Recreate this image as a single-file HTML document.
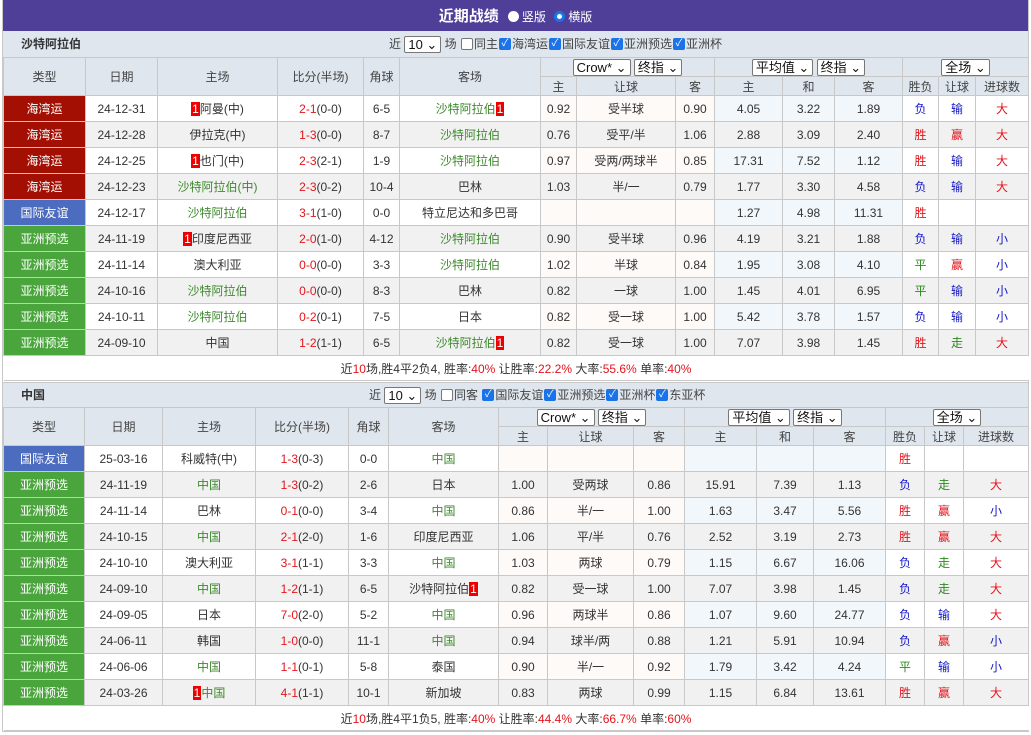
<!DOCTYPE html>
<html><head><meta charset="utf-8"><style>
*{margin:0;padding:0;box-sizing:border-box}
body{width:1031px;height:735px;background:#fff;font-family:"Liberation Sans","Noto Sans CJK SC",sans-serif;font-size:12px;color:#333;overflow:hidden}
.wrap{position:absolute;left:2px;top:0;width:1027px;border:1px solid #c8c8c8;border-top:none}
.title{height:31px;background:#4f3f98;color:#fff;text-align:center;font-size:15px;font-weight:bold;line-height:33px}
.title span{font-size:12px;font-weight:normal}
.rad{display:inline-block;width:11px;height:11px;border-radius:50%;background:#fff;vertical-align:-1px;margin:0 3px 0 5px}
.rad.on{background:#fff;border:3px solid #1a73e8}
.sec{height:26px;background:#dfe6ee;position:relative;line-height:26px}
.sec b{position:absolute;left:18px;font-size:12px;color:#333}
.sec .f{position:absolute;font-size:12px;color:#444}
.sel{display:inline-block;border:1px solid #777;background:#fff;border-radius:2px;height:17px;line-height:15px;padding:0 3px;font-size:13px;color:#111;vertical-align:middle}
.cb{display:inline-block;width:12px;height:12px;border:1px solid #777;border-radius:2px;background:#fff;vertical-align:middle;margin:-2px 1px 0}
.cb.on{background:#1a73e8;border-color:#1a73e8;color:#fff;font-size:10px;line-height:10px;text-align:center;font-style:normal}
table{border-collapse:collapse;table-layout:fixed;width:1025px}
td{border:1px solid #c8c8c8;text-align:center;height:26px;white-space:nowrap;overflow:hidden;font-size:12px}
.h td{background:#dfe6ee;height:19px;color:#444}
.g{color:#3e8a2e}.r{color:#e3141c}.bl{color:#1518c8}.gn{color:#2a8a1a}
.lg{background:#a30f02;color:#fff}.lb{background:#4c6cc0;color:#fff}.lz{background:#4aa53c;color:#fff}
.n{background:#e00;color:#fff;padding:0 1px}
tr.e td{background:#f1f1f1}
td.a{background:#fdfaf8}td.u{background:#f2f7fc}
tr.e td.a,tr.e td.u{background:#f1f1f1}
tr.e td.lg{background:#a30f02}tr.e td.lz{background:#4aa53c}tr.e td.lb{background:#4c6cc0}
.sum td{height:25px;background:#fff;border-left:none;border-right:none}
</style></head><body><div class="wrap">
<div class="title">近期战绩 <span><i class="rad"></i>竖版 <i class="rad on"></i>横版</span></div>
<div class="sec"><b>沙特阿拉伯</b><span class="f" style="left:386px">近 <span class="sel">10 ⌄</span> 场 <i class="cb"></i>同主<i class="cb on">✓</i>海湾运<i class="cb on">✓</i>国际友谊<i class="cb on">✓</i>亚洲预选<i class="cb on">✓</i>亚洲杯</span></div>
<table>
<colgroup><col width="82"><col width="72"><col width="120"><col width="86"><col width="36"><col width="141"><col width="36"><col width="99"><col width="39"><col width="68"><col width="52"><col width="68"><col width="36"><col width="37"><col width="53"></colgroup>
<tr class="h"><td rowspan="2">类型</td><td rowspan="2">日期</td><td rowspan="2">主场</td><td rowspan="2">比分(半场)</td><td rowspan="2">角球</td><td rowspan="2">客场</td><td colspan="3"><span class="sel">Crow* ⌄</span> <span class="sel">终指 ⌄</span></td><td colspan="3"><span class="sel">平均值 ⌄</span> <span class="sel">终指 ⌄</span></td><td colspan="3"><span class="sel">全场 ⌄</span></td></tr>
<tr class="h"><td>主</td><td>让球</td><td>客</td><td>主</td><td>和</td><td>客</td><td>胜负</td><td>让球</td><td>进球数</td></tr>
<tr><td class="lg">海湾运</td><td>24-12-31</td><td><span class="n">1</span>阿曼(中)</td><td><span class="r">2-1</span>(0-0)</td><td>6-5</td><td class="g">沙特阿拉伯<span class="n">1</span></td><td class="a">0.92</td><td class="a">受半球</td><td class="a">0.90</td><td class="u">4.05</td><td class="u">3.22</td><td class="u">1.89</td><td class="bl">负</td><td class="bl">输</td><td class="r">大</td></tr>
<tr class="e"><td class="lg">海湾运</td><td>24-12-28</td><td>伊拉克(中)</td><td><span class="r">1-3</span>(0-0)</td><td>8-7</td><td class="g">沙特阿拉伯</td><td class="a">0.76</td><td class="a">受平/半</td><td class="a">1.06</td><td class="u">2.88</td><td class="u">3.09</td><td class="u">2.40</td><td class="r">胜</td><td class="r">赢</td><td class="r">大</td></tr>
<tr><td class="lg">海湾运</td><td>24-12-25</td><td><span class="n">1</span>也门(中)</td><td><span class="r">2-3</span>(2-1)</td><td>1-9</td><td class="g">沙特阿拉伯</td><td class="a">0.97</td><td class="a">受两/两球半</td><td class="a">0.85</td><td class="u">17.31</td><td class="u">7.52</td><td class="u">1.12</td><td class="r">胜</td><td class="bl">输</td><td class="r">大</td></tr>
<tr class="e"><td class="lg">海湾运</td><td>24-12-23</td><td class="g">沙特阿拉伯(中)</td><td><span class="r">2-3</span>(0-2)</td><td>10-4</td><td>巴林</td><td class="a">1.03</td><td class="a">半/一</td><td class="a">0.79</td><td class="u">1.77</td><td class="u">3.30</td><td class="u">4.58</td><td class="bl">负</td><td class="bl">输</td><td class="r">大</td></tr>
<tr><td class="lb">国际友谊</td><td>24-12-17</td><td class="g">沙特阿拉伯</td><td><span class="r">3-1</span>(1-0)</td><td>0-0</td><td>特立尼达和多巴哥</td><td class="a"></td><td class="a"></td><td class="a"></td><td class="u">1.27</td><td class="u">4.98</td><td class="u">11.31</td><td class="r">胜</td><td></td><td></td></tr>
<tr class="e"><td class="lz">亚洲预选</td><td>24-11-19</td><td><span class="n">1</span>印度尼西亚</td><td><span class="r">2-0</span>(1-0)</td><td>4-12</td><td class="g">沙特阿拉伯</td><td class="a">0.90</td><td class="a">受半球</td><td class="a">0.96</td><td class="u">4.19</td><td class="u">3.21</td><td class="u">1.88</td><td class="bl">负</td><td class="bl">输</td><td class="bl">小</td></tr>
<tr><td class="lz">亚洲预选</td><td>24-11-14</td><td>澳大利亚</td><td><span class="r">0-0</span>(0-0)</td><td>3-3</td><td class="g">沙特阿拉伯</td><td class="a">1.02</td><td class="a">半球</td><td class="a">0.84</td><td class="u">1.95</td><td class="u">3.08</td><td class="u">4.10</td><td class="gn">平</td><td class="r">赢</td><td class="bl">小</td></tr>
<tr class="e"><td class="lz">亚洲预选</td><td>24-10-16</td><td class="g">沙特阿拉伯</td><td><span class="r">0-0</span>(0-0)</td><td>8-3</td><td>巴林</td><td class="a">0.82</td><td class="a">一球</td><td class="a">1.00</td><td class="u">1.45</td><td class="u">4.01</td><td class="u">6.95</td><td class="gn">平</td><td class="bl">输</td><td class="bl">小</td></tr>
<tr><td class="lz">亚洲预选</td><td>24-10-11</td><td class="g">沙特阿拉伯</td><td><span class="r">0-2</span>(0-1)</td><td>7-5</td><td>日本</td><td class="a">0.82</td><td class="a">受一球</td><td class="a">1.00</td><td class="u">5.42</td><td class="u">3.78</td><td class="u">1.57</td><td class="bl">负</td><td class="bl">输</td><td class="bl">小</td></tr>
<tr class="e"><td class="lz">亚洲预选</td><td>24-09-10</td><td>中国</td><td><span class="r">1-2</span>(1-1)</td><td>6-5</td><td class="g">沙特阿拉伯<span class="n">1</span></td><td class="a">0.82</td><td class="a">受一球</td><td class="a">1.00</td><td class="u">7.07</td><td class="u">3.98</td><td class="u">1.45</td><td class="r">胜</td><td class="gn">走</td><td class="r">大</td></tr>
<tr class="sum"><td colspan="15">近<span class="r">10</span>场,胜4平2负4, 胜率:<span class="r">40%</span> 让胜率:<span class="r">22.2%</span> 大率:<span class="r">55.6%</span> 单率:<span class="r">40%</span></td></tr>
</table>
<div class="sec" style="margin-top:1px;border-top:1px solid #c8c8c8;height:25px;line-height:24px"><b>中国</b><span class="f" style="left:366px">近 <span class="sel">10 ⌄</span> 场 <i class="cb"></i>同客 <i class="cb on">✓</i>国际友谊<i class="cb on">✓</i>亚洲预选<i class="cb on">✓</i>亚洲杯<i class="cb on">✓</i>东亚杯</span></div>
<table>
<colgroup><col width="81"><col width="78"><col width="93"><col width="93"><col width="40"><col width="110"><col width="49"><col width="86"><col width="51"><col width="72"><col width="57"><col width="72"><col width="39"><col width="39"><col width="65"></colgroup>
<tr class="h"><td rowspan="2">类型</td><td rowspan="2">日期</td><td rowspan="2">主场</td><td rowspan="2">比分(半场)</td><td rowspan="2">角球</td><td rowspan="2">客场</td><td colspan="3"><span class="sel">Crow* ⌄</span> <span class="sel">终指 ⌄</span></td><td colspan="3"><span class="sel">平均值 ⌄</span> <span class="sel">终指 ⌄</span></td><td colspan="3"><span class="sel">全场 ⌄</span></td></tr>
<tr class="h"><td>主</td><td>让球</td><td>客</td><td>主</td><td>和</td><td>客</td><td>胜负</td><td>让球</td><td>进球数</td></tr>
<tr><td class="lb">国际友谊</td><td>25-03-16</td><td>科威特(中)</td><td><span class="r">1-3</span>(0-3)</td><td>0-0</td><td class="g">中国</td><td class="a"></td><td class="a"></td><td class="a"></td><td class="u"></td><td class="u"></td><td class="u"></td><td class="r">胜</td><td></td><td></td></tr>
<tr class="e"><td class="lz">亚洲预选</td><td>24-11-19</td><td class="g">中国</td><td><span class="r">1-3</span>(0-2)</td><td>2-6</td><td>日本</td><td class="a">1.00</td><td class="a">受两球</td><td class="a">0.86</td><td class="u">15.91</td><td class="u">7.39</td><td class="u">1.13</td><td class="bl">负</td><td class="gn">走</td><td class="r">大</td></tr>
<tr><td class="lz">亚洲预选</td><td>24-11-14</td><td>巴林</td><td><span class="r">0-1</span>(0-0)</td><td>3-4</td><td class="g">中国</td><td class="a">0.86</td><td class="a">半/一</td><td class="a">1.00</td><td class="u">1.63</td><td class="u">3.47</td><td class="u">5.56</td><td class="r">胜</td><td class="r">赢</td><td class="bl">小</td></tr>
<tr class="e"><td class="lz">亚洲预选</td><td>24-10-15</td><td class="g">中国</td><td><span class="r">2-1</span>(2-0)</td><td>1-6</td><td>印度尼西亚</td><td class="a">1.06</td><td class="a">平/半</td><td class="a">0.76</td><td class="u">2.52</td><td class="u">3.19</td><td class="u">2.73</td><td class="r">胜</td><td class="r">赢</td><td class="r">大</td></tr>
<tr><td class="lz">亚洲预选</td><td>24-10-10</td><td>澳大利亚</td><td><span class="r">3-1</span>(1-1)</td><td>3-3</td><td class="g">中国</td><td class="a">1.03</td><td class="a">两球</td><td class="a">0.79</td><td class="u">1.15</td><td class="u">6.67</td><td class="u">16.06</td><td class="bl">负</td><td class="gn">走</td><td class="r">大</td></tr>
<tr class="e"><td class="lz">亚洲预选</td><td>24-09-10</td><td class="g">中国</td><td><span class="r">1-2</span>(1-1)</td><td>6-5</td><td>沙特阿拉伯<span class="n">1</span></td><td class="a">0.82</td><td class="a">受一球</td><td class="a">1.00</td><td class="u">7.07</td><td class="u">3.98</td><td class="u">1.45</td><td class="bl">负</td><td class="gn">走</td><td class="r">大</td></tr>
<tr><td class="lz">亚洲预选</td><td>24-09-05</td><td>日本</td><td><span class="r">7-0</span>(2-0)</td><td>5-2</td><td class="g">中国</td><td class="a">0.96</td><td class="a">两球半</td><td class="a">0.86</td><td class="u">1.07</td><td class="u">9.60</td><td class="u">24.77</td><td class="bl">负</td><td class="bl">输</td><td class="r">大</td></tr>
<tr class="e"><td class="lz">亚洲预选</td><td>24-06-11</td><td>韩国</td><td><span class="r">1-0</span>(0-0)</td><td>11-1</td><td class="g">中国</td><td class="a">0.94</td><td class="a">球半/两</td><td class="a">0.88</td><td class="u">1.21</td><td class="u">5.91</td><td class="u">10.94</td><td class="bl">负</td><td class="r">赢</td><td class="bl">小</td></tr>
<tr><td class="lz">亚洲预选</td><td>24-06-06</td><td class="g">中国</td><td><span class="r">1-1</span>(0-1)</td><td>5-8</td><td>泰国</td><td class="a">0.90</td><td class="a">半/一</td><td class="a">0.92</td><td class="u">1.79</td><td class="u">3.42</td><td class="u">4.24</td><td class="gn">平</td><td class="bl">输</td><td class="bl">小</td></tr>
<tr class="e"><td class="lz">亚洲预选</td><td>24-03-26</td><td class="g"><span class="n">1</span>中国</td><td><span class="r">4-1</span>(1-1)</td><td>10-1</td><td>新加坡</td><td class="a">0.83</td><td class="a">两球</td><td class="a">0.99</td><td class="u">1.15</td><td class="u">6.84</td><td class="u">13.61</td><td class="r">胜</td><td class="r">赢</td><td class="r">大</td></tr>
<tr class="sum"><td colspan="15">近<span class="r">10</span>场,胜4平1负5, 胜率:<span class="r">40%</span> 让胜率:<span class="r">44.4%</span> 大率:<span class="r">66.7%</span> 单率:<span class="r">60%</span></td></tr>
</table>
</div></body></html>
